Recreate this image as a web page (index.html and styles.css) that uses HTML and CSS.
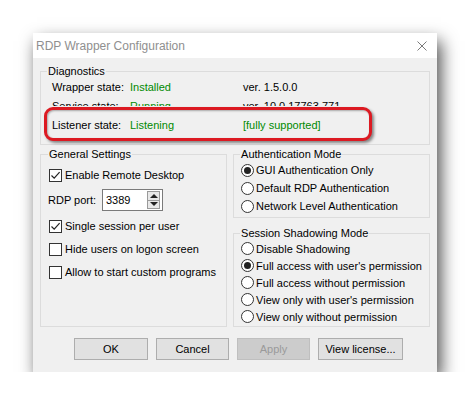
FILE: index.html
```html
<!DOCTYPE html>
<html>
<head>
<meta charset="utf-8">
<link rel="stylesheet" href="styles.css">
</head>
<body>
<div class="window">
  <div class="titlebar">
    <span class="title">RDP Wrapper Configuration</span>
    <svg class="close" width="10" height="10" viewBox="0 0 10 10"><path d="M0.5 0.5 L9.5 9.5 M9.5 0.5 L0.5 9.5" stroke="#7a7a7a" stroke-width="1" fill="none"/></svg>
  </div>
  <div class="body">
    <fieldset class="group diag">
      <legend>Diagnostics</legend>
      <div class="rows">
        <div class="row"><span class="lbl">Wrapper state:</span><span class="val green">Installed</span><span class="ver">ver. 1.5.0.0</span></div>
        <div class="row"><div class="cut"><span class="lbl">Service state:</span><span class="val green">Running</span><span class="ver">ver. 10.0.17763.771</span></div></div>
        <div class="row front"><span class="lbl">Listener state:</span><span class="val green">Listening</span><span class="ver green">[fully supported]</span></div>
        <div class="highlight"></div>
      </div>
    </fieldset>
    <div class="middle">
      <fieldset class="group general">
        <legend>General Settings</legend>
        <div class="opts">
          <label class="check"><span class="box"><svg width="11" height="11" viewBox="0 0 11 11"><path d="M1.5 5.5 L4.2 8.2 L9.6 2.2" stroke="#222" stroke-width="1.2" fill="none"/></svg></span>Enable Remote Desktop</label>
          <div class="port"><span class="portlbl">RDP port:</span><span class="spin"><span class="num">3389</span><span class="arrows"><span class="up"></span><span class="down"></span></span></span></div>
          <label class="check"><span class="box"><svg width="11" height="11" viewBox="0 0 11 11"><path d="M1.5 5.5 L4.2 8.2 L9.6 2.2" stroke="#222" stroke-width="1.2" fill="none"/></svg></span>Single session per user</label>
          <label class="check"><span class="box"></span>Hide users on logon screen</label>
          <label class="check"><span class="box"></span>Allow to start custom programs</label>
        </div>
      </fieldset>
      <div class="rightcol">
        <fieldset class="group auth">
          <legend>Authentication Mode</legend>
          <label class="radio"><span class="circ on"></span>GUI Authentication Only</label>
          <label class="radio"><span class="circ"></span>Default RDP Authentication</label>
          <label class="radio"><span class="circ"></span>Network Level Authentication</label>
        </fieldset>
        <fieldset class="group shadow">
          <legend>Session Shadowing Mode</legend>
          <label class="radio"><span class="circ"></span>Disable Shadowing</label>
          <label class="radio"><span class="circ on"></span>Full access with user's permission</label>
          <label class="radio"><span class="circ"></span>Full access without permission</label>
          <label class="radio"><span class="circ"></span>View only with user's permission</label>
          <label class="radio"><span class="circ"></span>View only without permission</label>
        </fieldset>
      </div>
    </div>
    <div class="buttons">
      <span class="btn ok">OK</span>
      <span class="btn cancel">Cancel</span>
      <span class="btn apply disabled">Apply</span>
      <span class="btn license">View license...</span>
    </div>
  </div>
</div>
</body>
</html>
```

FILE: styles.css
```css
html, body {
  margin: 0;
  background: #ffffff;
}
body {
  font-family: "Liberation Sans", Arial, sans-serif;
  font-size: 11px;
  color: #000;
}
.window {
  margin: 33px 0 0 33px;
  width: 404px;
  height: 339px;
  background: #f0f0f0;
  box-shadow: 4px 8px 16px rgba(0, 0, 0, 0.7);
  display: flex;
  flex-direction: column;
}
.titlebar {
  height: 25px;
  background: #fff;
  display: flex;
  align-items: center;
  justify-content: space-between;
  padding: 0 10px 0 3px;
}
.title {
  color: #8f8f8f;
  font-size: 12px;
}
.close {
  display: block;
}
.body {
  padding: 6px 7px 0 7px;
}
fieldset.group {
  margin: 0;
  border: 1px solid #dcdcdc;
  min-width: 0;
}
fieldset.group > legend {
  padding: 0 1px;
  line-height: 14px;
}
fieldset.diag {
  padding: 0 10px 9px 11px;
}
fieldset.diag > legend {
  margin-left: -5px;
}
.rows {
  position: relative;
}
.row {
  height: 19px;
  line-height: 19px;
  display: flex;
  white-space: nowrap;
}
.cut {
  display: flex;
  height: 9px;
  overflow: hidden;
}
.row.front {
  position: relative;
  z-index: 2;
}
.lbl {
  width: 78px;
}
.val {
  width: 113px;
}
.green {
  color: #008a00;
}
.highlight {
  position: absolute;
  left: -8px;
  top: 29px;
  width: 328px;
  height: 34px;
  box-sizing: border-box;
  border: 3px solid #dc1a22;
  border-radius: 9px;
  background: #f0f0f0;
  box-shadow: 2px 2px 3px rgba(0, 0, 0, 0.45), inset 1px 1px 2px rgba(0, 0, 0, 0.3);
  z-index: 1;
}
.middle {
  display: flex;
  gap: 6px;
  margin-top: 2px;
}
fieldset.general {
  width: 189px;
  box-sizing: border-box;
  padding: 5px 8px 0 8px;
}
fieldset.general > legend {
  margin-left: -1px;
}
.opts {
  display: flex;
  flex-direction: column;
  gap: 5px;
}
.check {
  display: flex;
  align-items: center;
  height: 18px;
  gap: 3px;
  white-space: nowrap;
}
.box {
  width: 13px;
  height: 13px;
  box-sizing: border-box;
  border: 1px solid #333;
  background: #fff;
  display: flex;
  align-items: center;
  justify-content: center;
}
.box svg {
  display: block;
}
.port {
  display: flex;
  align-items: center;
  height: 22px;
  margin-left: -1px;
  margin-bottom: 1px;
}
.portlbl {
  width: 54px;
}
.spin {
  width: 61px;
  height: 22px;
  box-sizing: border-box;
  border: 1px solid #7a7a7a;
  background: #fff;
  display: flex;
  align-items: center;
  justify-content: space-between;
  padding: 0 2px 0 3px;
}
.arrows {
  width: 13px;
  height: 18px;
  display: flex;
  flex-direction: column;
  border: 1px solid #9a9a9a;
  box-sizing: border-box;
  background: #e8e8e8;
}
.up, .down {
  flex: 1;
  display: flex;
  align-items: center;
  justify-content: center;
}
.up::before {
  content: "";
  border-left: 4px solid transparent;
  border-right: 4px solid transparent;
  border-bottom: 4px solid #222;
}
.down::before {
  content: "";
  border-left: 4px solid transparent;
  border-right: 4px solid transparent;
  border-top: 4px solid #222;
}
.down {
  border-top: 1px solid #9a9a9a;
}
.rightcol {
  flex: 1;
  display: flex;
  flex-direction: column;
}
fieldset.auth {
  padding: 0 7px 2px 7px;
}
fieldset.shadow {
  margin-top: 8px;
  padding: 0 7px 1px 7px;
}
fieldset.auth > legend,
fieldset.shadow > legend {
  margin-left: -1px;
}
.radio {
  display: flex;
  align-items: center;
  gap: 2px;
  white-space: nowrap;
}
.auth .radio {
  height: 18px;
}
.shadow .radio {
  height: 17px;
}
.circ {
  width: 13px;
  height: 13px;
  box-sizing: border-box;
  border: 1px solid #333;
  border-radius: 50%;
  background: #fff;
  display: flex;
  align-items: center;
  justify-content: center;
}
.circ.on::before {
  content: "";
  width: 7px;
  height: 7px;
  border-radius: 50%;
  background: #222;
}
.buttons {
  display: flex;
  gap: 8px;
  margin: 11px 0 0 34px;
}
.btn {
  height: 22px;
  box-sizing: border-box;
  border: 1px solid #adadad;
  background: #e1e1e1;
  display: flex;
  align-items: center;
  justify-content: center;
}
.ok { width: 74px; }
.cancel { width: 73px; }
.apply { width: 73px; }
.license { width: 85px; }
.btn.disabled {
  background: #cccccc;
  border-color: #bfbfbf;
  color: #9a9a9a;
}
```
